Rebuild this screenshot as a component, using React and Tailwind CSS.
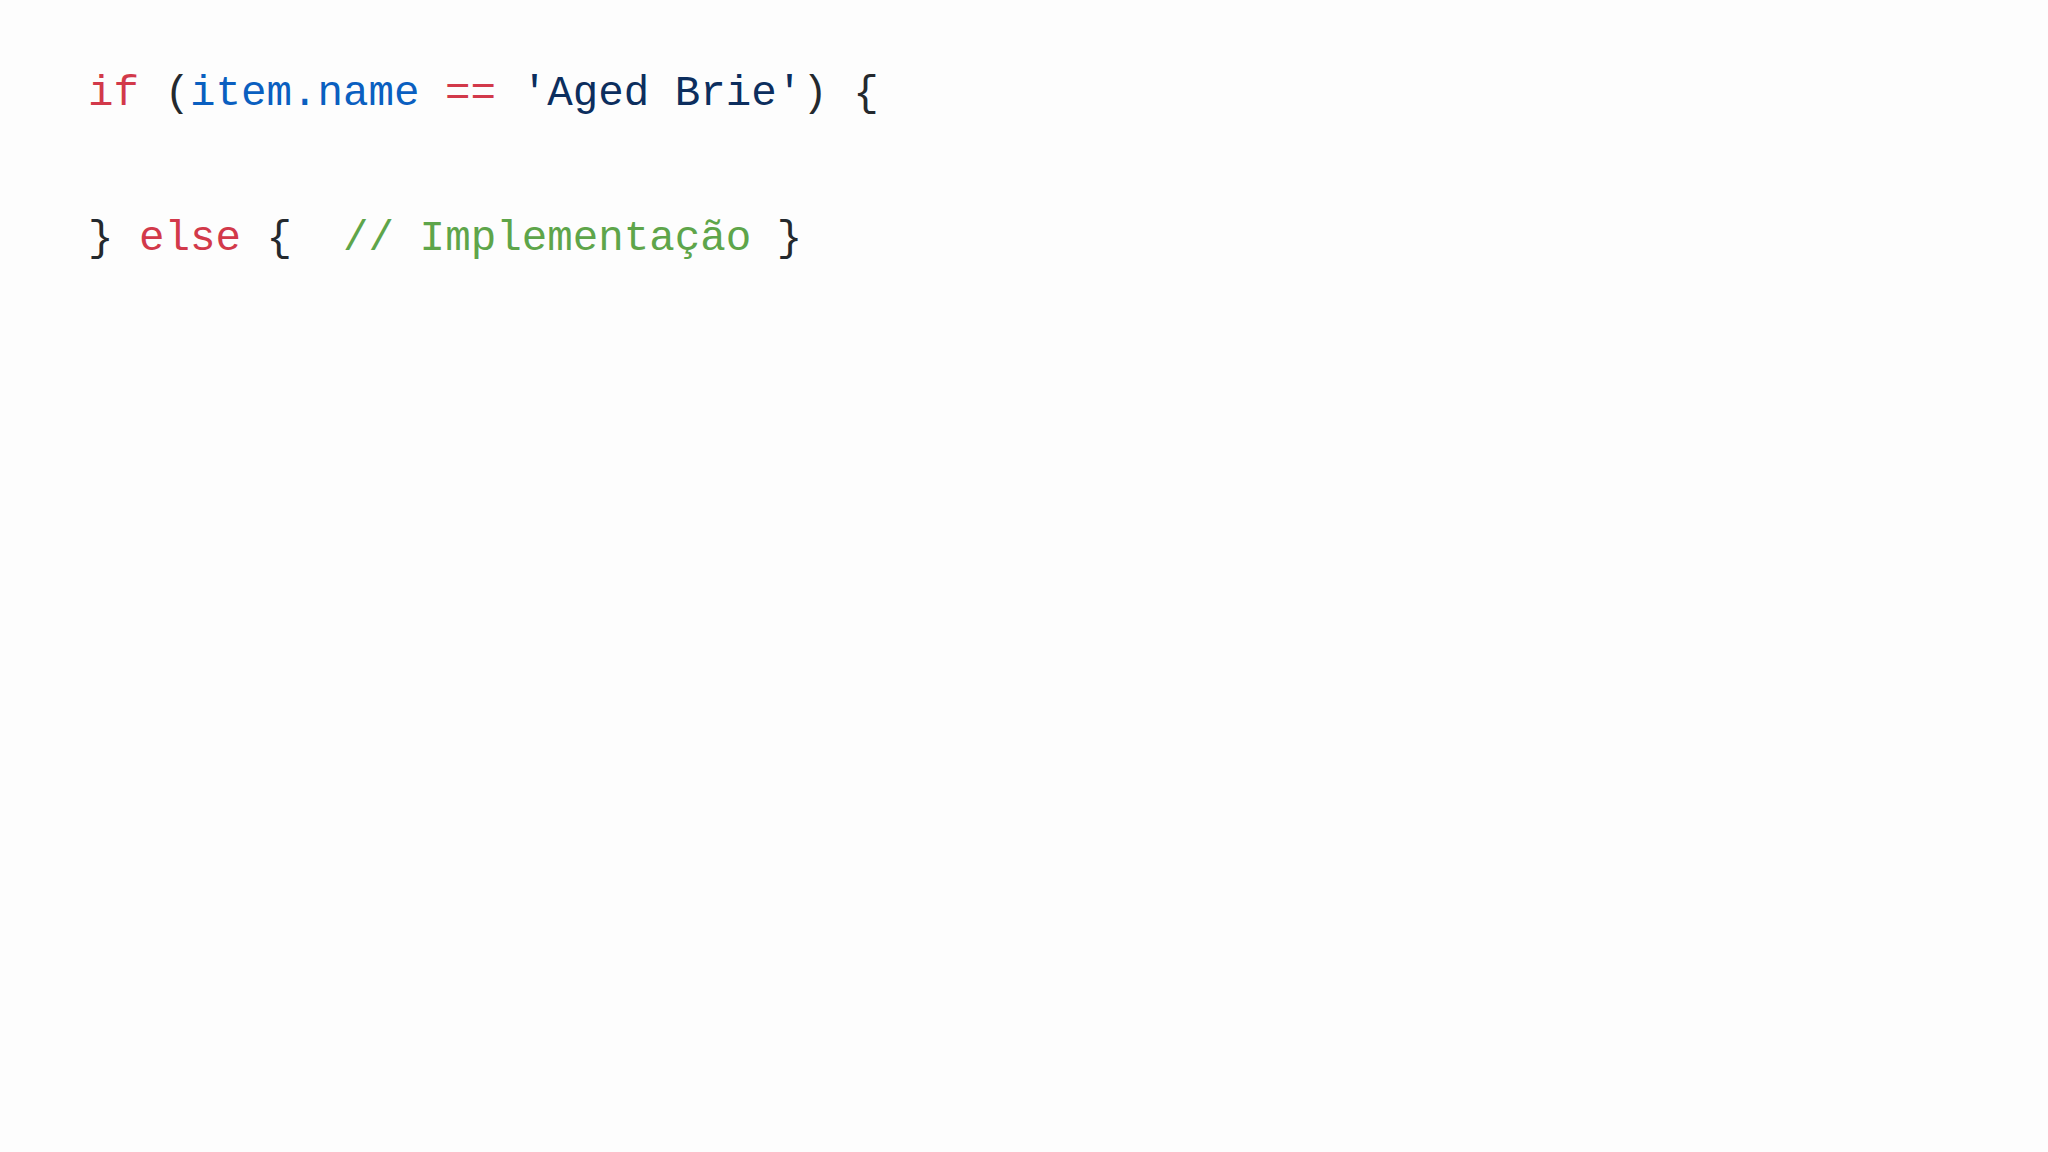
export default function App() {
  return (
    <div className="min-h-screen w-full bg-[#fdfdfd] pt-[22px] pl-[88px]">
      <div
        className="flex flex-col whitespace-pre text-[42.5px] leading-[145px] text-[#24292e]"
        style={{ fontFamily: '"Liberation Mono", "DejaVu Sans Mono", monospace' }}
      >
        {/* linha 1 */}
        <div>
          <span className="text-[#d2394a]">if</span>
          <span> (</span>
          <span className="text-[#0a5fc0]">item.name</span>
          <span> </span>
          <span className="text-[#d2394a]">==</span>
          <span> </span>
          <span className="text-[#0c2e5e]">'Aged Brie'</span>
          <span>) {'{'}</span>
        </div>
        {/* linha 2 */}
        <div>
          <span>{'}'} </span>
          <span className="text-[#d2394a]">else</span>
          <span> {'{'}  </span>
          <span className="text-[#5ea54a]">// Implementação</span>
          <span> {'}'}</span>
        </div>
      </div>
    </div>
  )
}
